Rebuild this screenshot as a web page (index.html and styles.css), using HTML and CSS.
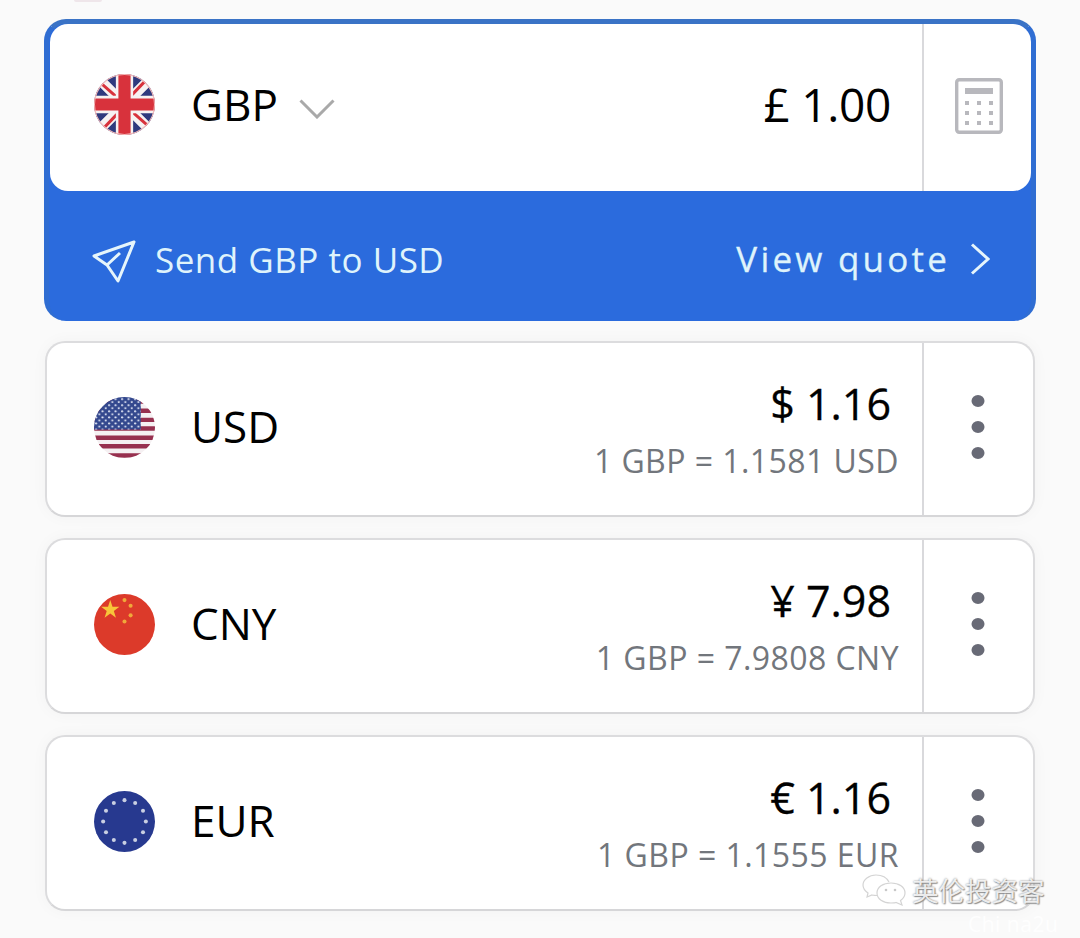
FILE: index.html
```html
<!DOCTYPE html>
<html lang="en">
<head>
<meta charset="utf-8">
<title>Currency converter</title>
<link rel="stylesheet" href="styles.css">
</head>
<body>
<main class="page">
  <div class="top-hint"></div>
  <section class="base-card">
    <div class="base-panel">
      <div class="row-main">
        <svg class="flag" viewBox="0 0 60 60" aria-hidden="true">
          <defs><clipPath id="c1"><circle cx="30" cy="30" r="30"/></clipPath></defs>
          <g clip-path="url(#c1)">
            <rect width="60" height="60" fill="#2f3a7e"/>
            <path d="M0 0L60 60M60 0L0 60" stroke="#f6f2f2" stroke-width="10"/>
            <path d="M0 3L26 26M60 57L34 34M57 0L34 24M3 60L26 36" stroke="#d8323c" stroke-width="3"/>
            <path d="M30 0V60M0 30H60" stroke="#f6f2f2" stroke-width="17"/>
            <path d="M30 0V60M0 30H60" stroke="#d8323c" stroke-width="12"/>
          </g>
          <circle cx="30" cy="30" r="29.5" fill="none" stroke="#f3b8b8" stroke-width="1"/>
        </svg>
        <span class="code">GBP</span>
        <svg class="caret" viewBox="0 0 36 20" aria-hidden="true"><path d="M1.5 1.5L18 18L34.5 1.5"/></svg>
        <div class="amounts"><div class="amount">£ 1.00</div></div>
      </div>
      <div class="side">
        <svg class="calc" viewBox="0 0 48 56" aria-hidden="true">
          <rect class="calc-frame" x="1.7" y="1.7" width="44.6" height="52.6" rx="2.5"/>
          <rect class="calc-fill" x="10" y="10" width="28" height="6"/>
          <g class="calc-fill">
            <rect x="10" y="23" width="4" height="4"/><rect x="22" y="23" width="4" height="4"/><rect x="34" y="23" width="4" height="4"/>
            <rect x="10" y="33" width="4" height="4"/><rect x="22" y="33" width="4" height="4"/><rect x="34" y="33" width="4" height="4"/>
            <rect x="10" y="43" width="4" height="4"/><rect x="22" y="43" width="4" height="4"/><rect x="34" y="43" width="4" height="4"/>
          </g>
        </svg>
      </div>
    </div>
    <div class="send-bar">
      <div class="send-left">
        <svg class="plane" viewBox="0 0 44 44" aria-hidden="true"><path d="M42 3L2 17L15 26L26 42ZM15 26L28 14"/></svg>
        <span class="send-text">Send GBP to USD</span>
      </div>
      <div class="send-right">
        <span class="quote-text">View quote</span>
        <svg class="next" viewBox="0 0 20 32" aria-hidden="true"><path d="M2 1.5L18 16L2 30.5"/></svg>
      </div>
    </div>
  </section>

  <section class="row-card">
    <div class="row-main">
      <svg class="flag" viewBox="0 0 60 60" aria-hidden="true">
        <defs>
          <clipPath id="c2"><circle cx="30" cy="30" r="30"/></clipPath>
          <pattern id="st" width="6.4" height="6" patternUnits="userSpaceOnUse"><circle cx="2" cy="2" r="1" fill="#e8ecf8"/><circle cx="5.2" cy="5" r="1" fill="#e8ecf8"/></pattern>
        </defs>
        <g clip-path="url(#c2)">
          <rect width="60" height="60" fill="#f5f0f2"/>
          <path d="M0 4.5H60M0 13.5H60M0 22.5H60M0 31H60M0 40H60M0 48.5H60M0 57.5H60" stroke="#97304f" stroke-width="4.4"/>
          <rect width="46" height="32" fill="#33488e"/>
          <rect width="46" height="32" fill="url(#st)"/>
        </g>
      </svg>
      <span class="code">USD</span>
      <div class="amounts">
        <div class="amount">$ 1.16</div>
        <div class="rate">1 GBP = 1.1581 USD</div>
      </div>
    </div>
    <div class="side">
      <svg class="dots" viewBox="0 0 14 66" aria-hidden="true"><ellipse cx="7" cy="7" rx="6.5" ry="6"/><ellipse cx="7" cy="33" rx="6.5" ry="6"/><ellipse cx="7" cy="59" rx="6.5" ry="6"/></svg>
    </div>
  </section>

  <section class="row-card">
    <div class="row-main">
      <svg class="flag" viewBox="0 0 60 60" aria-hidden="true">
        <circle cx="30" cy="30" r="30" fill="#dc3a2a"/>
        <polygon fill="#f8c53a" points="16,6 18.2,12.6 25,12.6 19.5,16.7 21.6,23.4 16,19.3 10.4,23.4 12.5,16.7 7,12.6 13.8,12.6"/>
        <circle cx="30" cy="6" r="2" fill="#f0a83a"/><circle cx="36" cy="11.500" r="2" fill="#f0a83a"/><circle cx="36" cy="21" r="2" fill="#f0a83a"/><circle cx="30" cy="27" r="2" fill="#f0a83a"/>
      </svg>
      <span class="code">CNY</span>
      <div class="amounts">
        <div class="amount">¥ 7.98</div>
        <div class="rate">1 GBP = 7.9808 CNY</div>
      </div>
    </div>
    <div class="side">
      <svg class="dots" viewBox="0 0 14 66" aria-hidden="true"><ellipse cx="7" cy="7" rx="6.5" ry="6"/><ellipse cx="7" cy="33" rx="6.5" ry="6"/><ellipse cx="7" cy="59" rx="6.5" ry="6"/></svg>
    </div>
  </section>

  <section class="row-card">
    <div class="row-main">
      <svg class="flag" viewBox="0 0 60 60" aria-hidden="true">
        <circle cx="30" cy="30" r="30" fill="#27398f"/>
        <g fill="#c9cfe2">
          <circle cx="30" cy="9" r="2"/><circle cx="40.500" cy="11.800" r="2"/><circle cx="48.200" cy="19.500" r="2"/><circle cx="51" cy="30" r="2"/><circle cx="48.200" cy="40.500" r="2"/><circle cx="40.500" cy="48.200" r="2"/><circle cx="30" cy="51" r="2"/><circle cx="19.500" cy="48.200" r="2"/><circle cx="11.800" cy="40.500" r="2"/><circle cx="9" cy="30" r="2"/><circle cx="11.800" cy="19.500" r="2"/><circle cx="19.500" cy="11.800" r="2"/>
        </g>
      </svg>
      <span class="code">EUR</span>
      <div class="amounts">
        <div class="amount">€ 1.16</div>
        <div class="rate">1 GBP = 1.1555 EUR</div>
      </div>
    </div>
    <div class="side">
      <svg class="dots" viewBox="0 0 14 66" aria-hidden="true"><ellipse cx="7" cy="7" rx="6.5" ry="6"/><ellipse cx="7" cy="33" rx="6.5" ry="6"/><ellipse cx="7" cy="59" rx="6.5" ry="6"/></svg>
    </div>
  </section>
</main>

<div class="watermark">
  <svg class="wm-icon" viewBox="0 0 44 32" aria-hidden="true">
    <path class="wm-back" d="M14 1C7 1 1 5.500 1 11C1 14.500 3 17 6 19L5 23L10 21C12 21.500 13 21.500 15 21.500"/>
    <path class="wm-back" d="M14 1C20 1 25 4 27 8"/>
    <path class="wm-front" d="M29 9C21 9 15 13 15 19C15 25 21 29 29 29C31 29 33 29 34 28.500L40 31L38.500 26.500C41.500 24.500 43 22 43 19C43 13 37 9 29 9Z"/>
    <circle class="wm-dot" cx="24" cy="16" r="1.300"/><circle class="wm-dot" cx="33" cy="16" r="1.300"/>
  </svg>
  <span class="wm-text">英伦投资客</span>
</div>
<div class="wm-sub">Chi na2u</div>
</body>
</html>
```
FILE: styles.css
```css
* { box-sizing: border-box; }
html, body { margin: 0; padding: 0; }
body {
  width: 1080px;
  height: 938px;
  overflow: hidden;
  position: relative;
  background: #fafafa;
  font-family: "Open Sans", "Noto Sans", sans-serif;
  color: #000;
}
.page {
  padding: 0 44px;
  display: flex;
  flex-direction: column;
}
.top-hint {
  width: 28px;
  height: 2px;
  margin: 0 0 17px 30px;
  background: #efe6ea;
  border-radius: 0 0 8px 8px;
}
.base-card {
  height: 302px;
  background: #2b6bdd;
  border-top: 5px solid #3a73c6;
  border-left: 5px solid #2f6dd2;
  border-right: 5px solid #2f6dd2;
  border-bottom: 0;
  border-radius: 22px;
  display: flex;
  flex-direction: column;
}
.base-panel {
  height: 167px;
  background: #fff;
  border-radius: 18px;
  display: flex;
  flex: none;
  margin-left: 1px;
}
.row-main {
  flex: 1;
  min-width: 0;
  display: flex;
  align-items: center;
  padding-left: 44px;
}
.base-panel .row-main { padding-bottom: 6px; }
.flag {
  width: 61px;
  height: 61px;
  flex: none;
  display: block;
  filter: blur(0.4px);
}
.code {
  font-size: 44px;
  line-height: 1;
  margin: 0 0 2px 36px;
}
.caret {
  width: 36px;
  height: 20px;
  margin: 8px 0 0 21px;
  fill: none;
  stroke: #a9a9a9;
  stroke-width: 3;
}
.amounts {
  margin-left: auto;
  display: flex;
  flex-direction: column;
  align-items: flex-end;
  padding: 3px 23px 0 0;
}
.base-panel .amounts { padding-top: 0; margin-bottom: 2px; }
.amount {
  font-size: 43px;
  line-height: 56px;
  padding-right: 8px;
  -webkit-text-stroke: 0.3px #000;
}
.base-panel .amount { font-size: 46px; font-weight: 500; letter-spacing: -0.3px; -webkit-text-stroke: 0; }
.rate {
  font-size: 32px;
  line-height: 40px;
  margin-top: 9px;
  color: #72767c;
  letter-spacing: 0.45px;
}
.side {
  width: 111px;
  flex: none;
  border-left: 2px solid #d9d9dc;
  display: flex;
  align-items: center;
  justify-content: center;
}
.base-panel .side { width: 109px; }
.calc { width: 48px; height: 56px; margin-left: 3px; margin-bottom: 4px; }
.calc-frame { fill: none; stroke: #b8b8bd; stroke-width: 3.4; }
.calc-fill { fill: #b8b8bd; }
.dots { width: 14px; height: 66px; fill: #686a76; margin: 0 2px 5px 0; }
.send-bar {
  flex: 1;
  display: flex;
  align-items: center;
  justify-content: space-between;
  padding: 6px 41px 0 43px;
  color: #dff3fb;
}
.send-left, .send-right { display: flex; align-items: center; }
.plane {
  width: 44px;
  height: 44px;
  margin-top: 3px;
  fill: none;
  stroke: #e6f5fb;
  stroke-width: 3;
  stroke-linejoin: round;
}
.send-text {
  font-size: 35px;
  line-height: 1;
  margin-left: 19px;
  letter-spacing: 0.5px;
}
.quote-text {
  font-size: 35px;
  line-height: 1;
  letter-spacing: 3.2px;
  font-weight: 500;
  margin-bottom: 2px;
  -webkit-text-stroke: 0.3px #dff3fb;
}
.next {
  width: 20px;
  height: 32px;
  margin-left: 20px;
  fill: none;
  stroke: #e6f5fb;
  stroke-width: 3;
}
.row-card {
  height: 176px;
  margin: 20px 1px 0 1px;
  background: #fff;
  border: 2px solid #dcdcde;
  border-bottom-color: #d6d6d8;
  border-radius: 20px;
  display: flex;
  box-shadow: 0 0 16px rgba(0, 0, 0, 0.035);
}
.row-card + .row-card { margin-top: 21px; }
.row-card .row-main { padding-left: 47px; padding-bottom: 4px; }
.watermark {
  position: absolute;
  left: 862px;
  top: 874px;
  display: flex;
  align-items: center;
  gap: 6px;
}
.wm-icon {
  width: 44px;
  height: 32px;
  fill: none;
  stroke: #d4d4d4;
  stroke-width: 1.2;
}
.wm-front { fill: rgba(255, 255, 255, 0.6); }
.wm-dot { fill: #c8c8c8; stroke: none; }
.wm-text {
  font-family: "Noto Sans CJK SC", sans-serif;
  font-size: 26.500px;
  line-height: 32px;
  color: rgba(255, 255, 255, 0.85);
  text-shadow: 0 0 2px #777, 1px 1px 1px #999;
}
.wm-sub {
  position: absolute;
  left: 968px;
  top: 911px;
  font-family: "Open Sans", sans-serif;
  font-size: 21px;
  line-height: 26px;
  color: rgba(255, 255, 255, 0.9);
  letter-spacing: 0.5px;
}
```
